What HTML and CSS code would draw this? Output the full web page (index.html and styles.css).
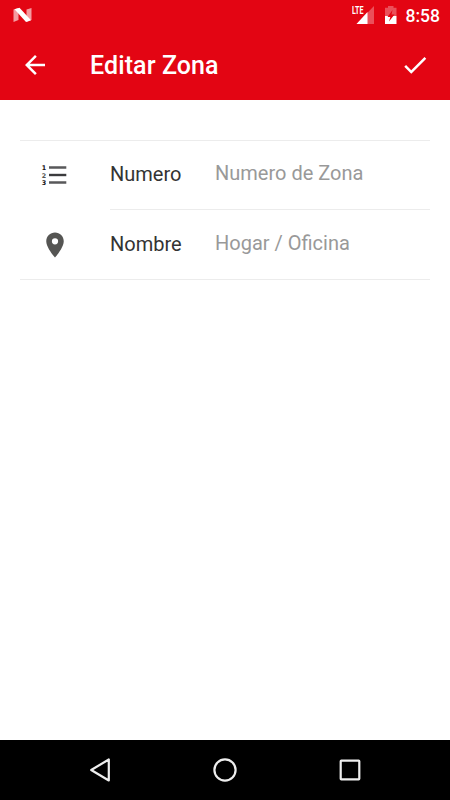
FILE: index.html
```html
<!DOCTYPE html>
<html lang="es">

<head>
    <meta charset="UTF-8">
    <meta name="viewport" content="width=device-width, initial-scale=1.0">
    <title>Editar Zona</title>
    <link rel="stylesheet" href="styles.css">
</head>

<body>
    <!-- Status bar -->
    <div class="status-bar">
        <svg class="nougat" width="20" height="16" viewBox="0 0 20 16">
            <path d="M0.500 2.500l5-1.500v12l-5 2z M13.500 2.500l5-1.500v12l-5 2z" fill="#fff" opacity="0.6" />
            <path d="M1.500 2.300l5-1.500 11.500 12.500-5 1.700z" fill="#fff" />
        </svg>
        <div class="status-icons">
            <svg class="signal" width="24" height="20" viewBox="0 0 24 20">
                <path d="M22 1v18H4.500z" fill="#fff" opacity="0.3" />
                <path d="M15.500 7v12H4.500z" fill="#fff" />
                <path d="M0 0h13v9H0z" fill="#e30513" />
                <text x="0" y="8.700" textLength="11.500" lengthAdjust="spacingAndGlyphs">LTE</text>
            </svg>
            <svg class="battery" width="12" height="18" viewBox="0 0 12 18">
                <path d="M0 1.800H3V0h5.500v1.800h3V10H0z" fill="#fff" opacity="0.3" />
                <path d="M0 10h11.500v8H0z" fill="#fff" />
                <path d="M7.500 4L2.500 11h2.800L4 15.500l5.500-7h-3z" fill="#e30513" />
            </svg>
            <span class="clock">8:58</span>
        </div>
    </div>

    <!-- App bar -->
    <header class="app-bar">
        <button class="icon-button" aria-label="Volver">
            <svg width="30" height="30" viewBox="0 0 24 24">
                <path d="M20 11H7.830l5.590-5.590L12 4l-8 8 8 8 1.410-1.410L7.830 13H20v-2z" fill="#fff" />
            </svg>
        </button>
        <h1>Editar Zona</h1>
        <button class="icon-button" aria-label="Guardar">
            <svg width="30" height="30" viewBox="0 0 24 24">
                <path d="M9 16.170L4.830 12l-1.420 1.410L9 19 21 7l-1.410-1.410z" fill="#fff" />
            </svg>
        </button>
    </header>

    <!-- Zone form -->
    <main>
        <form class="zone-form">
            <div class="form-group">
                <svg class="form-icon" width="30" height="30" viewBox="0 0 30 30">
                    <path d="M9 7.500h17.300M9 22.500h17.300" stroke="#58585a" stroke-width="2.400" />
                    <path d="M9 15h17.300" stroke="#3b3b3d" stroke-width="2.400" />
                    <text class="digit" x="1.800" y="10">1</text>
                    <text class="digit light" x="1.800" y="17.600">2</text>
                    <text class="digit" x="1.800" y="25.200">3</text>
                </svg>
                <div class="field">
                    <label for="zoneNumber">Numero</label>
                    <input type="text" id="zoneNumber" placeholder="Numero de Zona">
                </div>
            </div>
            <div class="form-group">
                <svg class="form-icon" width="30" height="30" viewBox="0 0 24 24">
                    <path d="M12 2C8.130 2 5 5.130 5 9c0 5.250 7 13 7 13s7-7.750 7-13c0-3.870-3.130-7-7-7zm0 9.500a2.500 2.500 0 0 1 0-5 2.500 2.500 0 0 1 0 5z" fill="#555553" />
                </svg>
                <div class="field">
                    <label for="zoneName">Nombre</label>
                    <input type="text" id="zoneName" placeholder="Hogar / Oficina">
                </div>
            </div>
        </form>
    </main>

    <!-- Navigation bar -->
    <nav class="nav-bar">
        <svg width="30" height="30" viewBox="0 0 30 30">
            <path d="M23.800 4.500v21L6.200 15z" />
        </svg>
        <svg width="30" height="30" viewBox="0 0 30 30">
            <circle cx="15" cy="15" r="10.600" />
        </svg>
        <svg width="30" height="30" viewBox="0 0 30 30">
            <rect x="5.700" y="5.700" width="18.600" height="18.600" rx="0.600" />
        </svg>
    </nav>
</body>

</html>
```

FILE: styles.css
```css
* {
    box-sizing: border-box;
}

body {
    display: flex;
    flex-direction: column;
    height: 100vh;
    margin: 0;
    background-color: #ffffff;
    font-family: Roboto, sans-serif;
}

svg {
    display: block;
    flex: none;
}

/* Status bar */
.status-bar {
    display: flex;
    justify-content: space-between;
    align-items: center;
    height: 30px;
    padding: 0 10px 0 13px;
    background-color: #e30513;
    color: #ffffff;
}

.status-icons {
    display: flex;
    align-items: center;
}

.signal {
    margin-right: 9px;
}

.signal text {
    fill: #ffffff;
    font-size: 10px;
    font-weight: bold;
}

.battery {
    margin-right: 9px;
}

.clock {
    font-size: 17.5px;
    font-weight: 500;
    line-height: 30px;
    padding-top: 2px;
}

/* App bar */
.app-bar {
    display: flex;
    align-items: center;
    height: 70px;
    padding: 0 20px;
    background-color: #e30513;
}

.icon-button {
    padding: 0;
    border: none;
    background: none;
    cursor: pointer;
}

h1 {
    flex: 1;
    margin: 0 0 0 40px;
    color: #ffffff;
    font-size: 25px;
    font-weight: 500;
    letter-spacing: 0.1px;
}

/* Form */
main {
    flex: 1;
    padding: 40px 20px;
}

.zone-form {
    border-top: 1px solid #ececec;
    border-bottom: 1px solid #ececec;
}

.form-group {
    display: flex;
    align-items: center;
    padding-left: 20px;
}

.form-icon {
    margin-right: 40px;
}

.form-group:last-child .form-icon {
    margin-top: 1px;
}

.digit {
    fill: #151515;
    font-family: "DejaVu Sans", sans-serif;
    font-size: 6.4px;
    font-weight: bold;
}

.digit.light {
    fill: #555555;
}

.field {
    display: flex;
    flex: 1;
    align-items: center;
    min-width: 0;
    height: 68px;
    padding-bottom: 2px;
}

.form-group + .form-group .field {
    height: 70px;
    border-top: 1px solid #ececec;
}

label {
    width: 105px;
    color: #333333;
    font-size: 20px;
}

input[type="text"] {
    flex: 1;
    min-width: 0;
    padding: 0 0 2px;
    border: none;
    outline: none;
    background: none;
    font-family: inherit;
    font-size: 20px;
}

input::placeholder {
    color: #999999;
}

/* Navigation bar */
.nav-bar {
    display: flex;
    justify-content: center;
    align-items: center;
    gap: 95px;
    height: 60px;
    background-color: #000000;
}

.nav-bar svg {
    fill: none;
    stroke: #eeeeee;
    stroke-width: 2.2;
    stroke-linejoin: round;
}
```
